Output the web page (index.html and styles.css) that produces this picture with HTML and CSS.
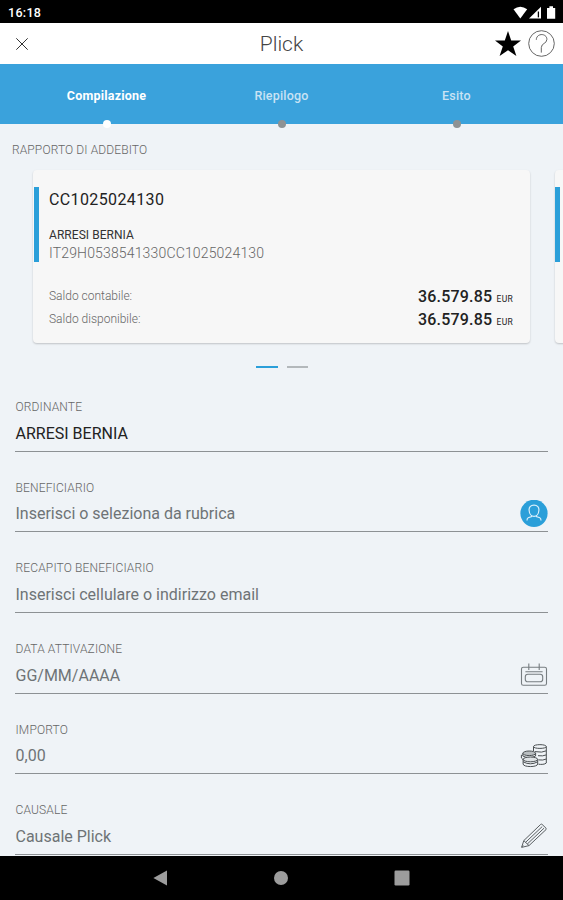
FILE: index.html
```html
<!DOCTYPE html>
<html lang="it">
<head>
    <meta charset="UTF-8">
    <meta name="viewport" content="width=device-width, initial-scale=1.0">
    <title>Plick</title>
    <link rel="stylesheet" href="styles.css">
</head>
<body>
    <div class="status-bar">
        <span class="clock">16:18</span>
        <svg width="44" height="14" viewBox="0 0 44 14" fill="#fff">
            <path d="M0.5 3.2 Q7.3 -1.8 14.2 3.2 L7.3 12.6 Z"/>
            <path d="M16 12.5 L28 0.8 V12.5 Z"/>
            <path d="M25.4 5.5 V11.4" stroke="#000" stroke-width="1.3"/>
            <path d="M34 2 h2.4 V0.3 h3.6 V2 h2.2 V12.7 H34 Z"/>
        </svg>
    </div>

    <header class="header">
        <svg class="close" width="12" height="12" viewBox="0 0 12 12" fill="none" stroke="#333" stroke-width="1">
            <path d="M0.3 0.3 L11.7 11.7 M11.7 0.3 L0.3 11.7"/>
        </svg>
        <h1>Plick</h1>
        <div class="actions">
            <svg width="26" height="26" viewBox="0 0 26 26">
                <path d="M13 0 L16.2 9.6 H26 L18.2 15.4 L21.4 25 L13 19.2 L4.6 25 L7.8 15.4 L0 9.6 H9.8 Z"/>
            </svg>
            <svg width="27" height="27" viewBox="0 0 27 27" fill="none" stroke="#555" stroke-width="0.9">
                <circle cx="13.5" cy="13.5" r="12.8"/>
                <path d="M8.3 9.8 C8.3 2.9 18.9 2.9 18.9 9.4 C18.9 13.8 13.3 13 13.3 17.6 V22.6"/>
            </svg>
        </div>
    </header>

    <nav class="steps">
        <div class="step active">Compilazione</div>
        <div class="step">Riepilogo</div>
        <div class="step">Esito</div>
    </nav>

    <main>
        <h2>RAPPORTO DI ADDEBITO</h2>
        <div class="carousel">
            <div class="card">
                <div class="account">
                    <div class="number">CC1025024130</div>
                    <div class="owner">ARRESI BERNIA</div>
                    <div class="iban">IT29H0538541330CC1025024130</div>
                </div>
                <div class="balance"><span>Saldo contabile:</span><b>36.579.85 <small>EUR</small></b></div>
                <div class="balance"><span>Saldo disponibile:</span><b>36.579.85 <small>EUR</small></b></div>
            </div>
            <div class="card next">
                <div class="account"></div>
            </div>
        </div>
        <div class="pager"><i class="on"></i><i></i></div>

        <form>
            <div class="field filled">
                <label>ORDINANTE</label>
                <div class="value"><span>ARRESI BERNIA</span></div>
            </div>
            <div class="field">
                <label>BENEFICIARIO</label>
                <div class="value">
                    <span>Inserisci o seleziona da rubrica</span>
                    <svg width="28" height="28" viewBox="0 0 28 28" fill="none" stroke="#d8effb" stroke-width="1.2">
                        <circle cx="14" cy="13.3" r="13.6" fill="#2b9fd9" stroke="none"/>
                        <path d="M14 5.2 C10.4 5.2 8.9 7.4 9.1 10.3 C9.3 13.6 11.3 16.4 14 16.4 C16.7 16.4 18.7 13.6 18.9 10.3 C19.1 7.4 17.6 5.2 14 5.2 Z"/>
                        <path d="M11.6 15.4 V16.6 L8.2 17.7 Q7 18.2 7 20.6 M16.4 15.4 V16.6 L19.8 17.7 Q21 18.2 21 20.6"/>
                    </svg>
                </div>
            </div>
            <div class="field">
                <label>RECAPITO BENEFICIARIO</label>
                <div class="value"><span>Inserisci cellulare o indirizzo email</span></div>
            </div>
            <div class="field">
                <label>DATA ATTIVAZIONE</label>
                <div class="value">
                    <span>GG/MM/AAAA</span>
                    <svg width="28" height="28" viewBox="0 0 28 28" fill="none" stroke="#777d81" stroke-width="1.1">
                        <rect x="1.5" y="6.2" width="25" height="18" rx="1.8"/>
                        <path d="M8.8 2.6 V9 M19.2 2.6 V9 M5.4 10.7 H22.6"/>
                        <rect x="5.3" y="13.2" width="17.4" height="7.6" rx="2.6"/>
                    </svg>
                </div>
            </div>
            <div class="field">
                <label>IMPORTO</label>
                <div class="value">
                    <span>0,00</span>
                    <svg width="28" height="28" viewBox="0 0 28 28" fill="none" stroke="#4a4f52" stroke-width="1">
                        <path d="M13.5 9 V4.6 C13.5 2 26.3 2 26.3 4.6 V21 C25 22.5 21 22.6 18.5 22.2"/>
                        <path d="M13.5 4.6 C13.5 7 26.3 7 26.3 4.6 M15 9.6 Q22.5 11 26.3 8.8 M18 13.7 Q23 14.4 26.3 12.9 M18.5 17.9 Q23 18.6 26.3 17"/>
                        <ellipse cx="9.2" cy="11.3" rx="6.4" ry="2.3" fill="#b9bec1"/>
                        <path d="M2.8 11.3 V14 Q9 17.3 15.6 14 V11.3 M1.4 12.8 V16 Q2.4 17.4 4 17.6"/>
                        <ellipse cx="10.4" cy="17.4" rx="7.3" ry="2.4" fill="#dfe3e6"/>
                        <path d="M3.1 17.4 V22 C3.1 25.4 17.7 25.4 17.7 22 V17.4 M3.1 19.8 Q10.4 23.8 17.7 19.8" />
                    </svg>
                </div>
            </div>
            <div class="field">
                <label>CAUSALE</label>
                <div class="value">
                    <span>Causale Plick</span>
                    <svg width="28" height="28" viewBox="0 0 28 28" fill="none" stroke="#5a5f62" stroke-width="1">
                        <path d="M1.6 25.4 L3.8 18.6 L20.7 2.4 Q21.4 1.8 22.1 2.4 L26 6.2 Q26.6 6.9 26 7.6 L9 23.6 Z"/>
                        <path d="M3.8 18.6 L9 23.6 M5.5 20.4 L22.2 4.6 M7.3 22 L24 6.2 M1.8 25 L3.2 23.4"/>
                    </svg>
                </div>
            </div>
        </form>
    </main>

    <footer class="nav-bar">
        <svg width="15" height="16" viewBox="0 0 15 16"><path d="M0.4 8 L14 0.4 V15.6 Z"/></svg>
        <svg width="14" height="14" viewBox="0 0 14 14"><circle cx="7" cy="7" r="7"/></svg>
        <svg width="16" height="16" viewBox="0 0 16 16"><rect x="0.5" y="0.5" width="15" height="15" rx="1.2"/></svg>
    </footer>
</body>
</html>
```
FILE: styles.css
```css
* {
    box-sizing: border-box;
}
body {
    margin: 0;
    height: 900px;
    overflow: hidden;
    display: flex;
    flex-direction: column;
    font-family: Roboto, sans-serif;
    background-color: #eff3f7;
    color: #222;
}
svg {
    display: block;
    flex: none;
}
.status-bar {
    height: 23px;
    flex: none;
    display: flex;
    justify-content: space-between;
    align-items: center;
    padding: 2px 6px 0 8px;
    background: #000;
    color: #fff;
}
.clock {
    font-size: 12.5px;
    font-weight: 500;
    letter-spacing: 0.3px;
}
.header {
    height: 41px;
    flex: none;
    display: grid;
    grid-template-columns: 1fr auto 1fr;
    align-items: center;
    padding: 0 8px 0 16px;
    background: #fff;
}
.header h1 {
    margin: 0;
    padding-right: 8px;
    font-size: 21px;
    font-weight: 300;
    color: #444;
}
.actions {
    display: flex;
    justify-content: flex-end;
    align-items: center;
    gap: 7.5px;
}
.steps {
    height: 60px;
    flex: none;
    display: flex;
    padding: 0 19px;
    background: #3aa2dc;
}
.step {
    position: relative;
    flex: 1;
    text-align: center;
    line-height: 63px;
    font-size: 12.5px;
    font-weight: 500;
    letter-spacing: 0.2px;
    color: #c9e3f4;
}
.step::after {
    content: "";
    position: absolute;
    left: 50%;
    bottom: -4px;
    width: 8px;
    height: 8px;
    margin-left: -4px;
    border-radius: 50%;
    background: #8e9294;
}
.step.active {
    font-weight: 700;
    color: #fff;
}
.step.active::after {
    background: #fff;
}
main {
    flex: 1;
    min-height: 0;
    overflow: hidden;
}
h2 {
    margin: 0;
    padding: 17px 12px 0;
    height: 46px;
    font-size: 12px;
    line-height: 18px;
    font-weight: 300;
    letter-spacing: 0.12px;
    color: #666;
}
.carousel {
    display: flex;
    gap: 25px;
    padding-left: 33px;
}
.card {
    flex: none;
    width: 497px;
    height: 173px;
    padding-top: 17px;
    border-radius: 4px;
    background: #f7f7f7;
    box-shadow: 0 1px 2px rgba(0, 0, 0, 0.2);
}
.account {
    height: 75px;
    margin: 0 0 22px 1px;
    padding-left: 10px;
    border-left: 5px solid #2b9fd9;
}
.card.next .account {
    margin-left: 0;
}
.number {
    height: 39px;
    line-height: 25px;
    font-size: 16px;
    letter-spacing: 0.38px;
}
.owner {
    line-height: 18px;
    font-size: 12px;
    letter-spacing: 0.05px;
    color: #333;
}
.iban {
    line-height: 19px;
    font-size: 14px;
    font-weight: 300;
    letter-spacing: 0.16px;
    color: #666;
}
.balance {
    display: flex;
    justify-content: space-between;
    align-items: center;
    height: 23px;
    padding: 0 17px 0 16px;
    font-size: 12px;
}
.balance span {
    font-weight: 300;
    color: #666;
}
.balance b {
    font-size: 16px;
    font-weight: 500;
    letter-spacing: 0.2px;
    padding-top: 2px;
}
.balance small {
    font-size: 8.5px;
    font-weight: 400;
    letter-spacing: 0.3px;
}
.pager {
    display: flex;
    justify-content: center;
    gap: 9px;
    height: 28px;
    padding-top: 23px;
}
.pager i {
    width: 21px;
    height: 2px;
    background: #b3b8bb;
}
.pager .on {
    width: 22px;
    background: #2b9fd9;
}
form {
    padding: 0 15px;
}
.field {
    height: 80.7px;
    padding-top: 27px;
    border-bottom: 1px solid #8d9194;
}
.field label {
    display: block;
    line-height: 18px;
    padding-left: 0.5px;
    font-size: 12px;
    font-weight: 300;
    letter-spacing: 0.15px;
    color: #666;
}
.value {
    display: flex;
    justify-content: space-between;
    align-items: center;
    height: 34px;
    font-size: 16px;
    color: #6e7376;
}
.value span {
    padding-left: 0.5px;
}
.filled .value {
    color: #222;
}
.nav-bar {
    height: 44px;
    flex: none;
    display: flex;
    justify-content: center;
    align-items: center;
    gap: 106px;
    background: #000;
    fill: #9c9c9c;
}
```
